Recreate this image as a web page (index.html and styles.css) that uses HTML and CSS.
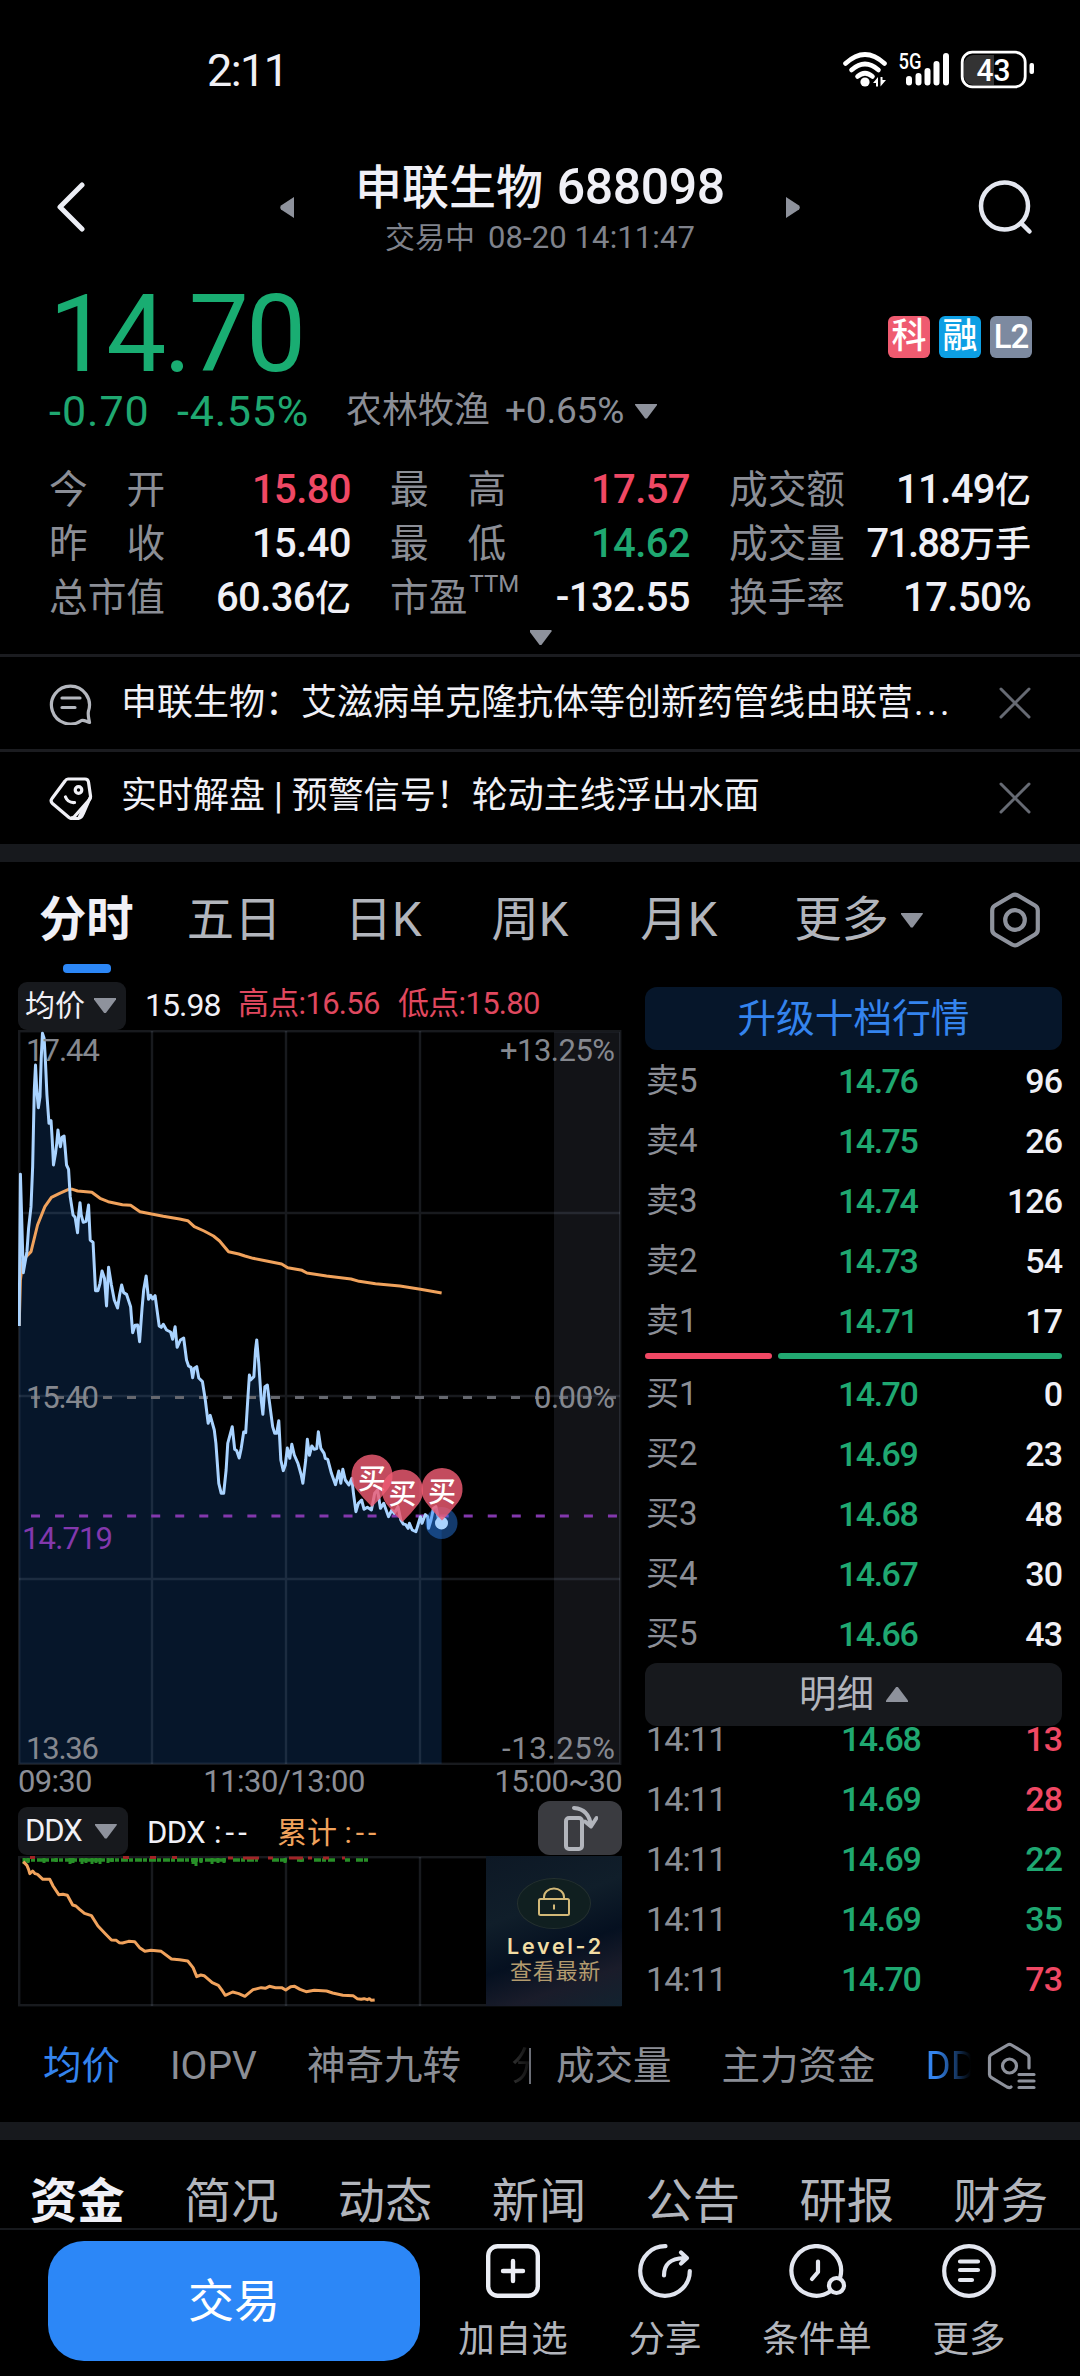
FILE: index.html
```html
<!DOCTYPE html>
<html lang="zh-CN">
<head>
<meta charset="utf-8">
<title>申联生物 688098</title>
<link rel="stylesheet" href="styles.css">
</head>
<body>
<div class="screen">
  <div class="statusbar">
    <span class="clock">2:11</span>
    <svg class="status-icons" width="196" height="40" viewBox="0 0 196 40">
      <g fill="none" stroke="#fff" stroke-width="4.6" stroke-linecap="round">
        <path d="M4.500 13.500Q24 -4.500 43.500 13.500"/><path d="M10.500 20Q24 8 37.500 20"/><path d="M16.500 26.500Q24 20 31.500 26.500"/>
      </g>
      <circle cx="24" cy="32" r="4.600" fill="#fff"/>
      <path d="M32 33l5-6v9.500h-2v-3.500zM39.500 27v9.500l5.500-6.500h-3.500v-3z" fill="#fff"/>
      <text class="net" x="57.500" y="19" textLength="23" lengthAdjust="spacingAndGlyphs">5G</text>
      <g stroke="#fff" stroke-width="6" stroke-linecap="round"><path d="M68 29v3.500M77.500 26v6.500M86.500 21v11.500M95.500 14v18.500M105 6v26.500"/></g>
      <path d="M133 5h-1a9 9 0 0 0-9 9v12a9 9 0 0 0 9 9h21V5z" fill="#333"/>
      <rect x="121.200" y="2.200" width="63" height="34.600" rx="10" fill="none" stroke="#fff" stroke-width="2.800"/>
      <rect x="188.500" y="13" width="4.500" height="11" rx="2" fill="#fff"/>
      <text class="batt" x="135.500" y="30.500" textLength="34" lengthAdjust="spacingAndGlyphs">43</text>
    </svg>
  </div>

  <header class="header">
    <svg width="30" height="50" viewBox="0 0 30 50"><path d="M26 3L4 25l22 22" fill="none" stroke="#eceef5" stroke-width="5" stroke-linecap="round" stroke-linejoin="round"/></svg>
    <svg class="prev" width="14" height="21" viewBox="0 0 14 21"><path d="M14 0v21L1 12.500q-1.500-2 0-4z" fill="#8e929c"/></svg>
    <div class="title">
      <h1><span>申联生物</span> <b>688098</b></h1>
      <p><span>交易中</span><i>08-20 14:11:47</i></p>
    </div>
    <svg width="14" height="21" viewBox="0 0 14 21"><path d="M0 0v21L13 12.500q1.500-2 0-4z" fill="#8e929c"/></svg>
    <svg class="search" width="56" height="56" viewBox="0 0 56 56"><g fill="none" stroke="#e4e7f0" stroke-width="4.500" stroke-linecap="round"><circle cx="26.500" cy="27" r="23.500"/><path d="M43.500 44.500l8 8"/></g></svg>
  </header>

  <section class="quote">
    <div class="price-row">
      <span class="price">14.70</span>
      <div class="badges"><span class="bd-red">科</span><span class="bd-blue">融</span><span class="bd-gray">L2</span></div>
    </div>
    <div class="change-row">
      <span class="chg">-0.70</span><span class="chg pct">-4.55%</span>
      <span class="industry">农林牧渔</span><span class="indpct">+0.65%</span><i class="tri-down"></i>
    </div>
    <div class="stats">
      <div><label class="spread">今<em></em>开</label><b class="red">15.80</b></div>
      <div><label class="spread">最<em></em>高</label><b class="red">17.57</b></div>
      <div><label>成交额</label><b>11.49<s>亿</s></b></div>
      <div><label class="spread">昨<em></em>收</label><b>15.40</b></div>
      <div><label class="spread">最<em></em>低</label><b class="green">14.62</b></div>
      <div><label>成交量</label><b class="tight">71.88<s>万手</s></b></div>
      <div><label>总市值</label><b>60.36<s>亿</s></b></div>
      <div><label>市盈<sup>TTM</sup></label><b>-132.55</b></div>
      <div><label>换手率</label><b>17.50%</b></div>
    </div>
    <div class="expand"><i class="tri-down"></i></div>
  </section>

  <div class="news">
    <svg width="44" height="44" viewBox="0 0 44 44"><g fill="none" stroke="#b4b7be" stroke-width="3.200" stroke-linecap="round" stroke-linejoin="round"><path d="M40.500 41.500c-3.500-1-5.500-3-8-2A19 19 0 1 1 39.500 30c-1 4 .5 8 1 11.500z"/><path d="M13 17h18M13 26.500h13"/></g></svg>
    <span>申联生物：艾滋病单克隆抗体等创新药管线由联营<i class="dots">...</i></span>
    <svg class="close" width="32" height="32" viewBox="0 0 32 32"><path d="M2 2l28 28M30 2L2 30" stroke="#666a73" stroke-width="3" stroke-linecap="round"/></svg>
  </div>
  <div class="news second">
    <svg width="44" height="44" viewBox="0 0 44 44"><g fill="none" stroke="#f0f0f6" stroke-width="3.200" stroke-linecap="round" stroke-linejoin="round"><path d="M19 3h17q3 0 3.500 3l2 14q.3 2-1 3.500L25 41q-2.500 2.500-5 .5L3.500 27.500q-2.500-2.500-.5-5L16 5q1.300-2 3-2z"/><path d="M41 22l-7 16q-1.500 4-5 4.500-3.500.5-6-.5M35 31l-5 11"/><circle cx="29.500" cy="14" r="3.300"/><path d="M16.500 21q2.500 6 9 5.500"/></g></svg>
    <span>实时解盘 | 预警信号！轮动主线浮出水面</span>
    <svg class="close" width="32" height="32" viewBox="0 0 32 32"><path d="M2 2l28 28M30 2L2 30" stroke="#666a73" stroke-width="3" stroke-linecap="round"/></svg>
  </div>

  <div class="band"></div>

  <nav class="periods">
    <span class="on">分时</span><span>五日</span><span>日K</span><span>周K</span><span>月K</span><span>更多<i class="tri-down"></i></span>
    <svg width="52" height="56" viewBox="0 0 52 56"><g fill="none" stroke="#8e929c" stroke-width="4.200" stroke-linejoin="round"><path d="M23 3.500q3-1.700 6 0l17 10q2.800 1.700 2.800 5v19q0 3.300-2.800 5l-17 10q-3 1.700-6 0l-17-10q-2.800-1.700-2.800-5v-19q0-3.300 2.800-5z"/><circle cx="26" cy="28" r="9.800"/></g></svg>
  </nav>

  <main class="market">
    <section class="charts">
      <div class="legend">
        <div class="chip">均价<i class="tri-down"></i></div>
        <b>15.98</b><span class="hi">高点:16.56</span><span class="lo">低点:15.80</span>
      </div>
      <svg class="chart" width="604" height="735" viewBox="18 1030 604 735">
        <rect x="554" y="1032" width="66" height="732" fill="#121317"/>
        <g transform="matrix(.40816 0 0 .33333 0 980)">
          <path class="area" d="M47 1038L50 583 57 878 66 815 70 745 76 680 80 560 84 330 87 255 90 330 94 383 98 350 101 235 104 160 108 175 111 235 115 345 120 430 125 422 128 480 131 555 136 520 139 490 142 450 145 480 148 500 152 472 157 468 160 510 163 555 168 568 172 650 179 705 184 712 190 758 193 700 196 668 199 705 204 727 211 724 217 675 221 780 228 787 234 932 240 932 245 910 250 873 256 895 261 978 266 862 273 915 280 960 288 984 293 945 298 915 303 938 310 943 320 980 325 1058 331 1036 337 1035 342 1085 348 985 352 930 358 888 364 958 369 946 374 957 380 947 390 1038 395 1042 400 1033 408 1050 418 1056 423 1078 429 1040 434 1102 442 1080 450 1074 457 1140 462 1158 468 1162 472 1193 476 1165 482 1160 487 1194 496 1205 503 1260 510 1330 515 1306 525 1350 529 1390 536 1510 542 1540 548 1540 554 1470 558 1390 569 1340 575 1408 580 1412 586 1434 591 1405 597 1356 602 1358 607 1260 611 1185 614 1200 622 1190 626 1110 629 1080 634 1150 640 1260 644 1303 649 1220 655 1215 660 1265 668 1340 673 1360 678 1360 683 1322 688 1440 694 1472 699 1455 704 1404 710 1435 715 1393 721 1425 730 1450 738 1485 742 1510 749 1440 753 1378 758 1426 764 1398 770 1408 776 1406 780 1355 786 1405 794 1420 797 1435 803 1438 812 1480 822 1514 830 1473 835 1510 840 1468 846 1500 855 1515 862 1495 866 1540 872 1595 878 1570 886 1560 892 1588 900 1582 910 1590 918 1540 925 1530 932 1585 940 1570 946 1590 952 1610 960 1590 966 1600 975 1580 982 1620 988 1632 994 1634 1000 1645 1003 1630 1010 1650 1019 1655 1024 1635 1030 1610 1034 1630 1042 1604 1048 1610 1050 1645 1056 1620 1062 1585 1068 1580 1074 1615 1082 1628V2351H47z"/>
        </g>
        <g class="grid"><path d="M152 1031v733M286 1031v733M420 1031v733M19 1213h601M19 1396h601M19 1579h601"/><rect x="19.200" y="1031.200" width="601" height="732.600"/></g>
        <path d="M31 1397.500h590" stroke="#66686f" stroke-width="2.800" stroke-dasharray="9 15" fill="none"/>
        <path d="M31 1516h587" stroke="#8338ad" stroke-width="3.200" stroke-dasharray="9 15.040" fill="none"/>
        <g transform="matrix(.40816 0 0 .33333 0 980)">
          <path class="avg" d="M47 1038L50 900 56 840 76 815 92 735 110 680 126 652 146 640 168 628 178 628 190 633 225 637 245 655 265 665 300 674 320 676 343 695 400 709 440 717 460 722 476 740 500 753 523 768 538 783 560 815 585 822 600 828 620 835 650 842 690 852 705 863 740 871 752 879 800 888 860 897 880 904 920 911 980 918 1030 928 1082 939"/>
          <path class="line" d="M47 1038L50 583 57 878 66 815 70 745 76 680 80 560 84 330 87 255 90 330 94 383 98 350 101 235 104 160 108 175 111 235 115 345 120 430 125 422 128 480 131 555 136 520 139 490 142 450 145 480 148 500 152 472 157 468 160 510 163 555 168 568 172 650 179 705 184 712 190 758 193 700 196 668 199 705 204 727 211 724 217 675 221 780 228 787 234 932 240 932 245 910 250 873 256 895 261 978 266 862 273 915 280 960 288 984 293 945 298 915 303 938 310 943 320 980 325 1058 331 1036 337 1035 342 1085 348 985 352 930 358 888 364 958 369 946 374 957 380 947 390 1038 395 1042 400 1033 408 1050 418 1056 423 1078 429 1040 434 1102 442 1080 450 1074 457 1140 462 1158 468 1162 472 1193 476 1165 482 1160 487 1194 496 1205 503 1260 510 1330 515 1306 525 1350 529 1390 536 1510 542 1540 548 1540 554 1470 558 1390 569 1340 575 1408 580 1412 586 1434 591 1405 597 1356 602 1358 607 1260 611 1185 614 1200 622 1190 626 1110 629 1080 634 1150 640 1260 644 1303 649 1220 655 1215 660 1265 668 1340 673 1360 678 1360 683 1322 688 1440 694 1472 699 1455 704 1404 710 1435 715 1393 721 1425 730 1450 738 1485 742 1510 749 1440 753 1378 758 1426 764 1398 770 1408 776 1406 780 1355 786 1405 794 1420 797 1435 803 1438 812 1480 822 1514 830 1473 835 1510 840 1468 846 1500 855 1515 862 1495 866 1540 872 1595 878 1570 886 1560 892 1588 900 1582 910 1590 918 1540 925 1530 932 1585 940 1570 946 1590 952 1610 960 1590 966 1600 975 1580 982 1620 988 1632 994 1634 1000 1645 1003 1630 1010 1650 1019 1655 1024 1635 1030 1610 1034 1630 1042 1604 1048 1610 1050 1645 1056 1620 1062 1585 1068 1580 1074 1615 1082 1628"/>
        </g>
        <circle cx="441.500" cy="1523" r="16" fill="#2a80f0" fill-opacity=".45"/>
        <circle cx="441.500" cy="1523" r="6.500" fill="#a9d3ff"/>
        <g class="pin">
          <path d="M372 1507Q363 1498 356 1489Q351 1482 351.500 1475A20.500 20.500 0 0 1 392.500 1475Q393 1482 388 1489Q381 1498 372 1507z"/><text x="372" y="1489">买</text>
          <path d="M402.500 1522Q393.500 1513 386.500 1504Q381.500 1497 382 1490A20.500 20.500 0 0 1 423 1490Q423.500 1497 418.500 1504Q411.500 1513 402.500 1522z"/><text x="402.500" y="1504">买</text>
          <path d="M442 1520.500Q433 1511.500 426 1502.500Q421 1495.500 421.500 1488.500A20.500 20.500 0 0 1 462.500 1488.500Q463 1495.500 458 1502.500Q451 1511.500 442 1520.500z"/><text x="442" y="1502">买</text>
        </g>
        <g class="scale">
          <text x="26" y="1061" textLength="74">17.44</text><text x="26" y="1408" textLength="73">15.40</text><text x="26" y="1759" textLength="73">13.36</text>
          <text x="500" y="1061" textLength="115">+13.25%</text><text x="534" y="1408" textLength="81">0.00%</text><text x="502" y="1759" textLength="113">-13.25%</text>
          <text class="cost" x="22" y="1549" textLength="91">14.719</text>
        </g>
      </svg>
      <div class="times"><span>09:30</span><span>11:30/13:00</span><span>15:00~30</span></div>
      <div class="legend ddx">
        <div class="chip">DDX<i class="tri-down"></i></div>
        <span class="w">DDX <i>:--</i></span><span class="o">累计 <i>:--</i></span>
        <div class="rotate"><svg width="36" height="48" viewBox="0 0 36 48"><g fill="none" stroke="#b2b5bc" stroke-width="4" stroke-linecap="round" stroke-linejoin="round"><rect x="4" y="14" width="16" height="31" rx="3"/><path d="M12 4q15 1 17 18M23 17.500l6 5L34.500 14"/></g></svg></div>
      </div>
      <div class="sub">
        <svg width="604" height="151" viewBox="18 1855 604 151">
          <g class="grid"><path d="M152 1856v149M286 1856v149M420 1856v149"/><rect x="19.200" y="1856.200" width="601" height="148"/></g>
          <path d="M23 1859h203M233 1859h25M272 1859h15M297 1859h7M314 1859h22M345 1859h5M356 1859h14" stroke="#278f27" stroke-width="3.500" stroke-dasharray="7 1 4 2"/>
          <path d="M24 1857v6M28 1857v5M44 1857v5M56 1857v4M70 1857v6M73 1857v5M82 1857v6M86 1857v5M92 1857v6M96 1857v5M100 1857v6M108 1857v5M112 1857v4M193 1857v6M196 1857v8M201 1857v5M212 1857v6M218 1857v5M224 1857v5M285 1857v5M301 1857v4" stroke="#278f27" stroke-width="3"/>
          <path d="M30 1856.500h5M123 1856.500h6M150 1856.500h6M172 1856.500h5M228 1857h5M243 1857h16M268 1857h5M289 1857h14M308 1857h4M323 1857h6M342 1857h3" stroke="#a12427" stroke-width="3"/>
          <g transform="matrix(.40816 0 0 .33333 0 1770)"><path class="avg" d="M57 272L66 283 70 295 73 308 80 300 86 308 92 310 105 325 122 325 130 345 144 371 154 370 165 373 178 402 186 405 195 415 207 427 224 434 240 465 258 488 273 507 285 508 292 515 300 516 315 511 330 512 342 530 355 541 370 538 395 541 420 564 440 566 460 570 473 590 482 617 492 612 500 614 520 635 535 643 545 660 552 673 570 663 585 668 600 676 608 668 620 656 640 650 650 652 660 646 675 650 690 650 700 657 712 647 722 646 735 655 750 662 770 658 800 660 815 666 840 673 865 674 875 683 885 685 892 683 900 686 905 683 910 688 918 687"/></g>
        </svg>
        <div class="level2">
          <div class="lock"><svg width="34" height="30" viewBox="0 0 34 30"><g fill="none" stroke="#d3b978" stroke-width="2"><rect x="2" y="12" width="30" height="16" rx="1.500"/><path d="M7 12v-2a10 8.500 0 0 1 20 0v2M17 17.500v5"/></g></svg></div>
          <b>Level-2</b><span>查看最新</span>
        </div>
      </div>
    </section>

    <section class="book">
      <div class="upgrade">升级十档行情</div>
      <ul>
        <li><span>卖5</span><b>14.76</b><i>96</i></li>
        <li><span>卖4</span><b>14.75</b><i>26</i></li>
        <li><span>卖3</span><b>14.74</b><i>126</i></li>
        <li><span>卖2</span><b>14.73</b><i>54</i></li>
        <li><span>卖1</span><b>14.71</b><i>17</i></li>
      </ul>
      <div class="ratio"><i></i><i></i></div>
      <ul>
        <li><span>买1</span><b>14.70</b><i>0</i></li>
        <li><span>买2</span><b>14.69</b><i>23</i></li>
        <li><span>买3</span><b>14.68</b><i>48</i></li>
        <li><span>买4</span><b>14.67</b><i>30</i></li>
        <li><span>买5</span><b>14.66</b><i>43</i></li>
      </ul>
      <div class="detail">明细<i class="tri-up"></i></div>
      <ul class="ticks">
        <li><span>14:11</span><b>14.68</b><i class="red">13</i></li>
        <li><span>14:11</span><b>14.69</b><i class="red">28</i></li>
        <li><span>14:11</span><b>14.69</b><i class="green">22</i></li>
        <li><span>14:11</span><b>14.69</b><i class="green">35</i></li>
        <li><span>14:11</span><b>14.70</b><i class="red">73</i></li>
      </ul>
    </section>
  </main>

  <nav class="indicators">
    <div class="group g1"><span class="on">均价</span><span class="iopv">IOPV</span><span>神奇九转</span><span class="fade">分</span></div>
    <i class="sep"></i>
    <div class="group g2"><span>成交量</span><span>主力资金</span><span class="on fade-dd">DD</span></div>
    <svg width="50" height="48" viewBox="0 0 50 48"><g fill="none" stroke="#8e929c" stroke-width="3.200" stroke-linecap="round" stroke-linejoin="round"><path d="M42 26V15.500q0-2-2-3.200L24.500 3q-2-1.200-4 0L4.500 12.300q-2 1.200-2 3.200v17q0 2 2 3.200l15.500 9.300q2.500 1.200 4 0"/><circle cx="22.500" cy="24" r="7"/><path d="M32 32.500h15M32 39h15M32 45.500h15"/></g></svg>
  </nav>

  <div class="band"></div>

  <nav class="sections"><span class="on">资金</span><span>简况</span><span>动态</span><span>新闻</span><span>公告</span><span>研报</span><span>财务</span></nav>

  <footer class="actions">
    <div class="trade">交易</div>
    <div class="act"><svg width="54" height="54" viewBox="0 0 54 54"><g fill="none" stroke="#eceef5" stroke-width="4.400" stroke-linecap="round"><rect x="2.200" y="2.200" width="49.600" height="49.600" rx="9.500"/><path d="M27 17v20M17 27h20"/></g></svg><span>加自选</span></div>
    <div class="act"><svg width="54" height="54" viewBox="0 0 54 54"><g fill="none" stroke="#e0e4ee" stroke-width="4.200" stroke-linecap="round" stroke-linejoin="round"><path d="M27.500 2.200A24.800 24.800 0 1 0 51.800 27"/><path d="M26 31.500C26 20 32 14.500 46 14M43 8.500l6 5.500-6 5.500"/></g></svg><span>分享</span></div>
    <div class="act"><svg width="58" height="54" viewBox="0 0 58 54" class="cond"><g fill="none" stroke="#e4e7f0" stroke-width="4.200" stroke-linecap="round" stroke-linejoin="round"><path d="M51.300 33A24.800 24.800 0 1 0 41 47.500"/><path d="M29 17.500V28l-6 7"/><circle cx="47.500" cy="41.500" r="7.500"/></g></svg><span>条件单</span></div>
    <div class="act"><svg width="54" height="54" viewBox="0 0 54 54"><g fill="none" stroke="#e4e7f0" stroke-width="4.200" stroke-linecap="round"><circle cx="27" cy="27" r="24.800"/><path d="M18 17.500h18M18 26h18M18 36h12"/></g></svg><span>更多</span></div>
  </footer>
</div>
</body>
</html>
```
FILE: styles.css
```css
* { box-sizing: border-box; margin: 0; padding: 0; }
body { background: #000; color: #f0f0f6; font-family: Roboto, "Noto Sans CJK SC", sans-serif; }
i, em, s { font-style: normal; text-decoration: none; }
b, h1 { font-weight: 500; }
svg { display: block; flex: none; }
ul { list-style: none; }
.screen { width: 1080px; height: 2376px; overflow: hidden; display: flex; flex-direction: column; }
.screen > * { flex: none; }
.red { color: #f04864; }
.green { color: #1fa871; }
.tri-down, .tri-up { flex: none; width: 22px; height: 15px; background: #8e929c; clip-path: polygon(0 0, 100% 0, 100% 10%, 54% 100%, 46% 100%, 0 10%); }
.tri-up { clip-path: polygon(0 100%, 100% 100%, 100% 90%, 54% 0, 46% 0, 0 90%); }

.statusbar { height: 136px; padding: 50px 43px 0 207px; display: flex; justify-content: space-between; align-items: flex-start; }
.clock { font-size: 45px; line-height: 42px; letter-spacing: -1.600px; }
.status-icons .net { font: 500 22px Roboto; fill: #fff; }
.status-icons .batt { font: 500 31px Roboto; fill: #fff; }

.header { height: 140px; padding: 2px 46px 0 56px; display: flex; align-items: center; }
.header .prev { margin: 0 0 0 194px; }
.title { width: 492px; text-align: center; margin-top: 4px; }
.title h1 { font-size: 47px; line-height: 58px; height: 58px; white-space: nowrap; word-spacing: 2px; }
.title b { font-size: 50px; letter-spacing: -.400px; }
.title p { display: flex; justify-content: center; gap: 13px; font-size: 30px; line-height: 44px; color: #7f828b; }
.title p i { letter-spacing: .100px; font-size: 31px; }
.header .search { margin-left: auto; }

.quote { height: 378px; padding: 8px 48px 0 49px; }
.price-row { display: flex; justify-content: space-between; align-items: flex-start; height: 98px; }
.price { font-size: 107px; line-height: 102px; color: #19ad72; letter-spacing: -2.900px; }
.badges { display: flex; gap: 9px; margin-top: 32px; }
.badges span { width: 42px; height: 42px; border-radius: 6px; line-height: 41px; text-align: center; font-size: 35px; font-weight: 500; color: #fff; overflow: hidden; }
.bd-red { background: #ef5b70; } .bd-blue { background: #0d9fe4; } .badges .bd-gray { background: #7d8aa0; letter-spacing: -1px; font-size: 33px; }
.change-row { display: flex; align-items: center; height: 58px; white-space: nowrap; color: #8b8e96; line-height: 46px; }
.chg { font-size: 43px; color: #1fa871; letter-spacing: 1px; width: 128px; }
.chg.pct { width: 169px; letter-spacing: .800px; }
.industry { font-size: 36px; width: 159px; }
.indpct { font-size: 37px; letter-spacing: -.200px; margin-right: 11px; }
.stats { margin-top: 23px; display: grid; grid-template-columns: 302px 300px 302px; column-gap: 39px; grid-auto-rows: 54px; }
.stats div { display: flex; justify-content: space-between; align-items: center; white-space: nowrap; line-height: 54px; }
.stats label { font-size: 38.700px; color: #8b8e96; display: flex; }
.stats em { width: 38.700px; }
.stats b { font-size: 40px; letter-spacing: -.600px; }
.stats b.tight { letter-spacing: -1.900px; }
.stats s { font-size: 36px; letter-spacing: 0; }
.stats sup { font-size: 24px; line-height: 24px; margin-top: 1px; margin-left: 2px; }
.expand { display: flex; justify-content: center; padding-top: 5px; }

.news { height: 95px; border-top: 3px solid #1b1c20; padding: 0 48px 0 49px; display: flex; align-items: center; }
.news span { font-size: 36px; margin-left: 28px; white-space: nowrap; line-height: 50px; }
.dots { letter-spacing: 3.500px; margin-left: 1px; }
.news > svg { margin-top: -1px; }
.news.second span { margin-top: -4px; }
.news .close { margin-left: auto; margin-right: 1px; }
.band { height: 18px; background: #17191d; }

.periods { height: 119px; padding: 26px 39px 0 39px; display: flex; align-items: flex-start; font-size: 47.300px; line-height: 64px; color: #b2b5bc; white-space: nowrap; }
.periods span { display: flex; position: relative; }
.periods span:nth-child(1) { width: 148px; color: #f0f0f6; font-weight: 700; }
.periods span:nth-child(2) { width: 158px; }
.periods span:nth-child(3) { width: 147px; }
.periods span:nth-child(4) { width: 149px; }
.periods span:nth-child(5) { width: 154px; }
.periods span:nth-child(6) { width: 195px; align-items: center; gap: 12px; }
.periods .on::after { content: ""; position: absolute; left: 24px; top: 76px; width: 48px; height: 9px; border-radius: 4px; background: #2c87f7; }
.periods svg { margin-top: 4px; }

.market { display: flex; height: 1026px; padding-left: 18px; }
.charts { width: 604px; }
.legend { display: flex; align-items: center; height: 49px; font-size: 31px; white-space: nowrap; line-height: 44px; }
.chip { width: 108px; height: 48px; border-radius: 9px; background: #17191d; display: flex; align-items: center; gap: 9px; padding-left: 7px; font-size: 30px; }
.legend b { margin: -2px 0 0 19px; width: 93px; font-weight: 400; font-size: 32px; letter-spacing: -1px; }
.legend .hi, .legend .lo { color: #e0485f; font-size: 31px; letter-spacing: -.700px; margin-top: -3px; }
.legend .hi { width: 160px; }
.area { fill: #06162a; }
.line, .avg { fill: none; stroke: #a9d3ff; stroke-width: 3; vector-effect: non-scaling-stroke; stroke-linejoin: round; }
.avg { stroke: #f0a25c; }
.grid { fill: none; stroke: #8c9bb4; stroke-opacity: .17; stroke-width: 2.400; }
.pin path { fill: #ee5b73; fill-opacity: .82; }
.pin text { font: 500 28px "Noto Sans CJK SC"; fill: #fff; text-anchor: middle; }
.scale { font: 31px Roboto; fill: #85888f; }
.scale .cost { fill: #8338ad; }
.times { display: flex; justify-content: space-between; height: 36px; font-size: 31px; line-height: 34px; color: #8b8e96; letter-spacing: -.700px; }
.times span:nth-child(2) { margin-left: -18px; letter-spacing: -.500px; }
.legend.ddx { height: 55px; align-items: flex-end; line-height: 46px; }
.ddx .chip { width: 110px; margin-bottom: 1px; font-size: 31px; letter-spacing: -1px; gap: 13px; }
.ddx .w { margin-left: 19px; width: 130px; letter-spacing: -.600px; word-spacing: 2px; }
.ddx .o { color: #f0a25c; font-size: 30px; }
.ddx span i { letter-spacing: 4px; }
.rotate { margin-left: auto; width: 84px; height: 54px; margin-bottom: 1px; border-radius: 12px; background: #3a3b40; padding: 3px 0 0 24px; }
.sub { display: flex; position: relative; }
.level2 { position: absolute; right: 0; top: 0; width: 136px; height: 150px; background: linear-gradient(160deg, #0d1825 0%, #101e2a 35%, #051020 60%, #1a1c2a 80%, #12222f 100%); display: flex; flex-direction: column; align-items: center; }
.lock { width: 74px; height: 51px; margin-top: 22px; border-radius: 50%; border: 1px solid #24302f; background: #101f20; display: flex; align-items: center; justify-content: center; }
.lock svg { margin-top: -3px; }
.level2 b { font-size: 21.500px; line-height: 26px; margin-top: 4px; color: #f2dda4; letter-spacing: 2.700px; margin-right: -3px; white-space: nowrap; font-family: Inter, sans-serif; font-weight: 600; }
.level2 span { font-size: 22px; line-height: 26px; color: #b39b6e; letter-spacing: .700px; margin-left: 3px; white-space: nowrap; }

.book { width: 417px; margin-left: 23px; padding-top: 6px; }
.upgrade, .detail { height: 63px; border-radius: 12px; background: #06162a; color: #3484ee; font-size: 38.700px; line-height: 63px; text-align: center; }
.detail { background: #17191d; color: #b2b5bc; font-size: 37.500px; display: flex; align-items: center; justify-content: center; gap: 12px; margin-top: -1px; }
.book ul { padding-top: 1px; }
.book li { height: 60px; display: flex; align-items: center; font-size: 34px; line-height: 60px; letter-spacing: -1.500px; }
.book li span { width: 193px; padding-left: 1px; color: #8b8e96; font-size: 33px; letter-spacing: 0; }
.book li b { color: #1fa871; letter-spacing: -1.500px; font-weight: 500; }
.book li i { margin-left: auto; font-weight: 500; letter-spacing: -1px; }
.ratio { display: flex; gap: 6px; height: 12px; padding-top: 2px; }
.ratio i { height: 6px; border-radius: 3px; width: 127px; background: #f04864; }
.ratio i + i { flex: 1; background: #22a871; }
.book .ticks { margin-top: -18px; }
.ticks li span { width: 196px; font-size: 34px; letter-spacing: -.800px; }

.indicators { height: 115px; padding: 3px 42px 0 43px; display: flex; align-items: center; font-size: 38.500px; color: #8b8e96; white-space: nowrap; }
.group { display: flex; overflow: hidden; line-height: 60px; gap: 50px; }
.g1 { width: 486px; }
.g1 .iopv { width: 92px; font-size: 39px; }
.indicators .on { color: #3484ee; }
.fade { color: transparent; background: linear-gradient(90deg, #333, #000 70%); -webkit-background-clip: text; background-clip: text; }
.sep { width: 2px; height: 36px; background: #6b6e76; }
.g2 { width: 416px; margin-left: 25px; margin-right: 15px; }
.indicators .fade-dd { color: transparent; background: linear-gradient(90deg, #3484ee 20%, #000 90%); -webkit-background-clip: text; background-clip: text; }

.sections { height: 88px; padding: 30px 0 0 30px; display: grid; grid-template-columns: repeat(7, 153.900px); font-size: 47.300px; line-height: 64px; color: #b2b5bc; overflow: hidden; }
.sections .on { color: #f0f0f6; font-weight: 700; }

.actions { height: 148px; border-top: 2px solid #17191d; padding-left: 48px; display: flex; background: #000; }
.trade { width: 372px; height: 120px; margin: 11px 17px 0 0; border-radius: 36px; background: #2c87f7; color: #fff; font-size: 46px; line-height: 120px; text-align: center; }
.act { width: 152px; display: flex; flex-direction: column; align-items: center; padding-top: 14px; font-size: 36.500px; line-height: 50px; color: #b2b5bc; }
.act svg { margin-bottom: 17px; }
.act .cond { margin-left: 2px; }
```
